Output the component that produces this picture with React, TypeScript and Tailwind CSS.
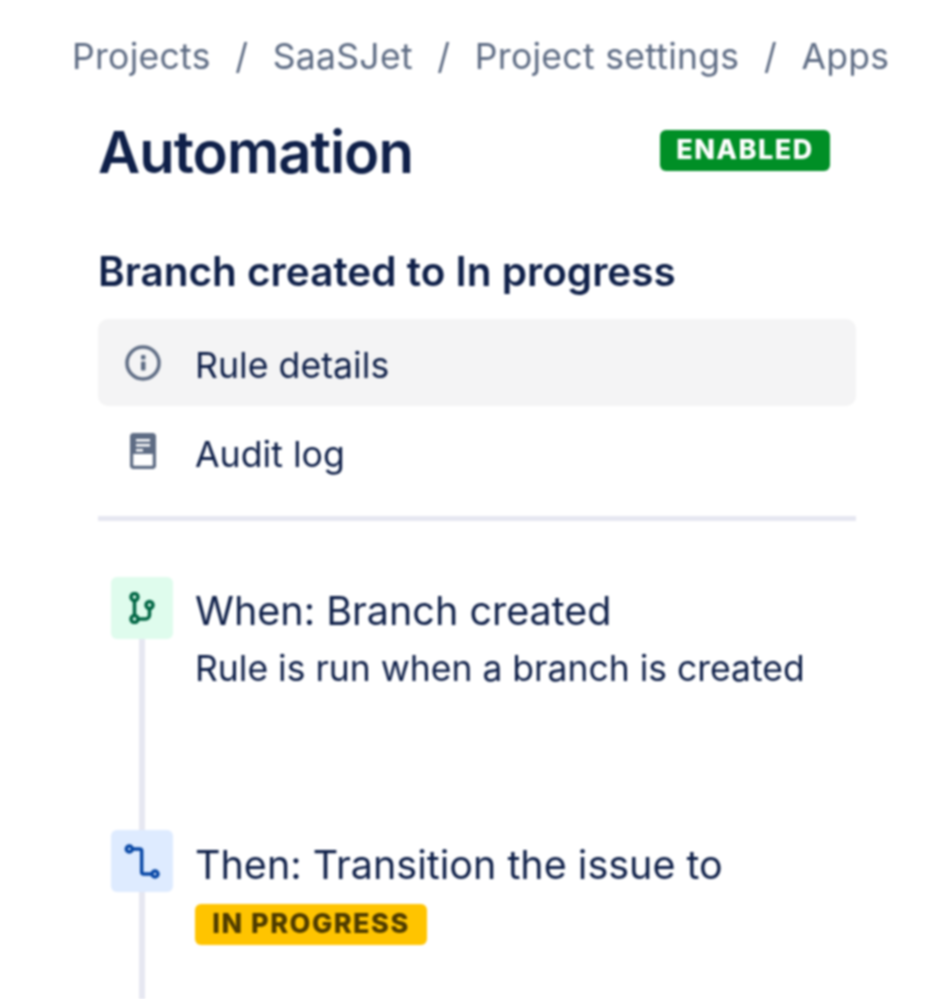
const crumbs = ['Projects', 'SaaSJet', 'Project settings', 'Apps'];

function InfoIcon() {
  return (
    <svg width="38" height="38" viewBox="0 0 38 38" fill="none">
      <circle cx="19" cy="19" r="16" stroke="#5e6c84" strokeWidth="3.500" />
      <rect x="17" y="11" width="4.500" height="4.500" rx="1" fill="#5e6c84" />
      <rect x="17" y="17.500" width="4.500" height="9" rx="1" fill="#5e6c84" />
    </svg>
  );
}

function LogIcon() {
  return (
    <svg className="-mt-[6px]" width="26" height="36" viewBox="0 0 26 36" fill="none">
      <rect x="1.500" y="1.500" width="23" height="33" rx="2.500" fill="#fff" stroke="#5e6c84" strokeWidth="3.500" />
      <rect x="2" y="2" width="22" height="19" fill="#5e6c84" />
      <rect x="6" y="6" width="14" height="2.500" fill="#fff" />
      <rect x="6" y="11" width="14" height="2.500" fill="#fff" />
      <rect x="6" y="16" width="7" height="2.500" fill="#fff" />
    </svg>
  );
}

function BranchIcon() {
  return (
    <svg width="28" height="32" viewBox="0 0 28 32" fill="none" stroke="#006644" strokeWidth="3.500">
      <circle cx="6.500" cy="5" r="3.500" />
      <circle cx="6.500" cy="27" r="3.500" />
      <circle cx="21.500" cy="13" r="3.500" />
      <path d="M6.500 8.500v15M10 27h7.500a4 4 0 0 0 4-4v-6.500" />
    </svg>
  );
}

function TransitionIcon() {
  return (
    <svg width="38" height="38" viewBox="0 0 38 38" fill="none" stroke="#0747a6" strokeWidth="3.500">
      <circle cx="6.300" cy="7" r="3" />
      <circle cx="32" cy="32" r="3" />
      <path d="M9.300 7h7.400a2 2 0 0 1 2 2v21a2 2 0 0 0 2 2H29" />
    </svg>
  );
}

export default function App() {
  return (
    <div className="h-[999px] w-[951px] overflow-hidden bg-white font-['Inter',sans-serif] text-[#0f2049] blur-[0.9px]">
      <nav className="mt-[37px] flex h-[40px] items-center pl-[72px] text-[35.500px] tracking-[0.3px] text-[#5e6c84]">
        {crumbs.map((c, i) => (
          <div key={c} className="flex items-center">
            {i > 0 && <span className="w-[62px] text-center">/</span>}
            <span>{c}</span>
          </div>
        ))}
      </nav>

      <div className="ml-[98px] w-[758px]">
        <div className="mt-[40px] flex h-[70px] items-center justify-between pr-[26px]">
          <h1 className="text-[58px] font-semibold tracking-[-1px]">Automation</h1>
          <span className="-mt-[3px] flex h-[41px] w-[170px] items-center justify-center rounded-[6px] bg-[#008f26] text-[27px] font-extrabold tracking-[1.500px] text-white">
            ENABLED
          </span>
        </div>

        <h2 className="mt-[62px] h-[45px] text-[40.500px] leading-[45px] font-semibold">Branch created to In progress</h2>

        <div className="mt-[25px]">
          <div className="flex h-[87px] items-center rounded-[10px] bg-[#f4f4f5]">
            <div className="flex w-[97px] justify-center pr-[8px]"><InfoIcon /></div>
            <span className="pt-[6px] text-[35.700px]">Rule details</span>
          </div>
          <div className="mt-[4px] flex h-[87px] items-center">
            <div className="flex w-[97px] justify-center pr-[8px]"><LogIcon /></div>
            <span className="pt-[2px] text-[35.700px]">Audit log</span>
          </div>
        </div>

        <div className="mt-[19px] h-[5px] bg-[#e6e7f1]" />

        <div className="mt-[56px] pl-[13px]">
          <div className="flex h-[253px]">
            <div className="flex w-[84px] flex-col items-start">
              <div className="flex h-[62px] w-[62px] items-center justify-center rounded-[6px] bg-[#dffced]"><BranchIcon /></div>
              <div className="ml-[28px] w-[6px] flex-1 bg-[#e6e7f1]" />
            </div>
            <div className="pt-[9px]">
              <div className="h-[50px] text-[39.500px] leading-[50px]">When: Branch created</div>
              <div className="mt-[10px] text-[35.500px] leading-[46px]">Rule is run when a branch is created</div>
            </div>
          </div>
          <div className="flex h-[200px]">
            <div className="flex w-[84px] flex-col items-start">
              <div className="flex h-[62px] w-[62px] items-center justify-center rounded-[6px] bg-[#deebff]"><TransitionIcon /></div>
              <div className="ml-[28px] w-[6px] flex-1 bg-[#e6e7f1]" />
            </div>
            <div className="pt-[10px]">
              <div className="h-[50px] text-[39.500px] leading-[50px]">Then: Transition the issue to</div>
              <span className="mt-[14px] flex h-[41px] w-[232px] items-center justify-center rounded-[6px] bg-[#ffc400] text-[27px] font-extrabold tracking-[1.500px] text-[#4f3c00]">
                IN PROGRESS
              </span>
            </div>
          </div>
        </div>
      </div>
    </div>
  );
}
